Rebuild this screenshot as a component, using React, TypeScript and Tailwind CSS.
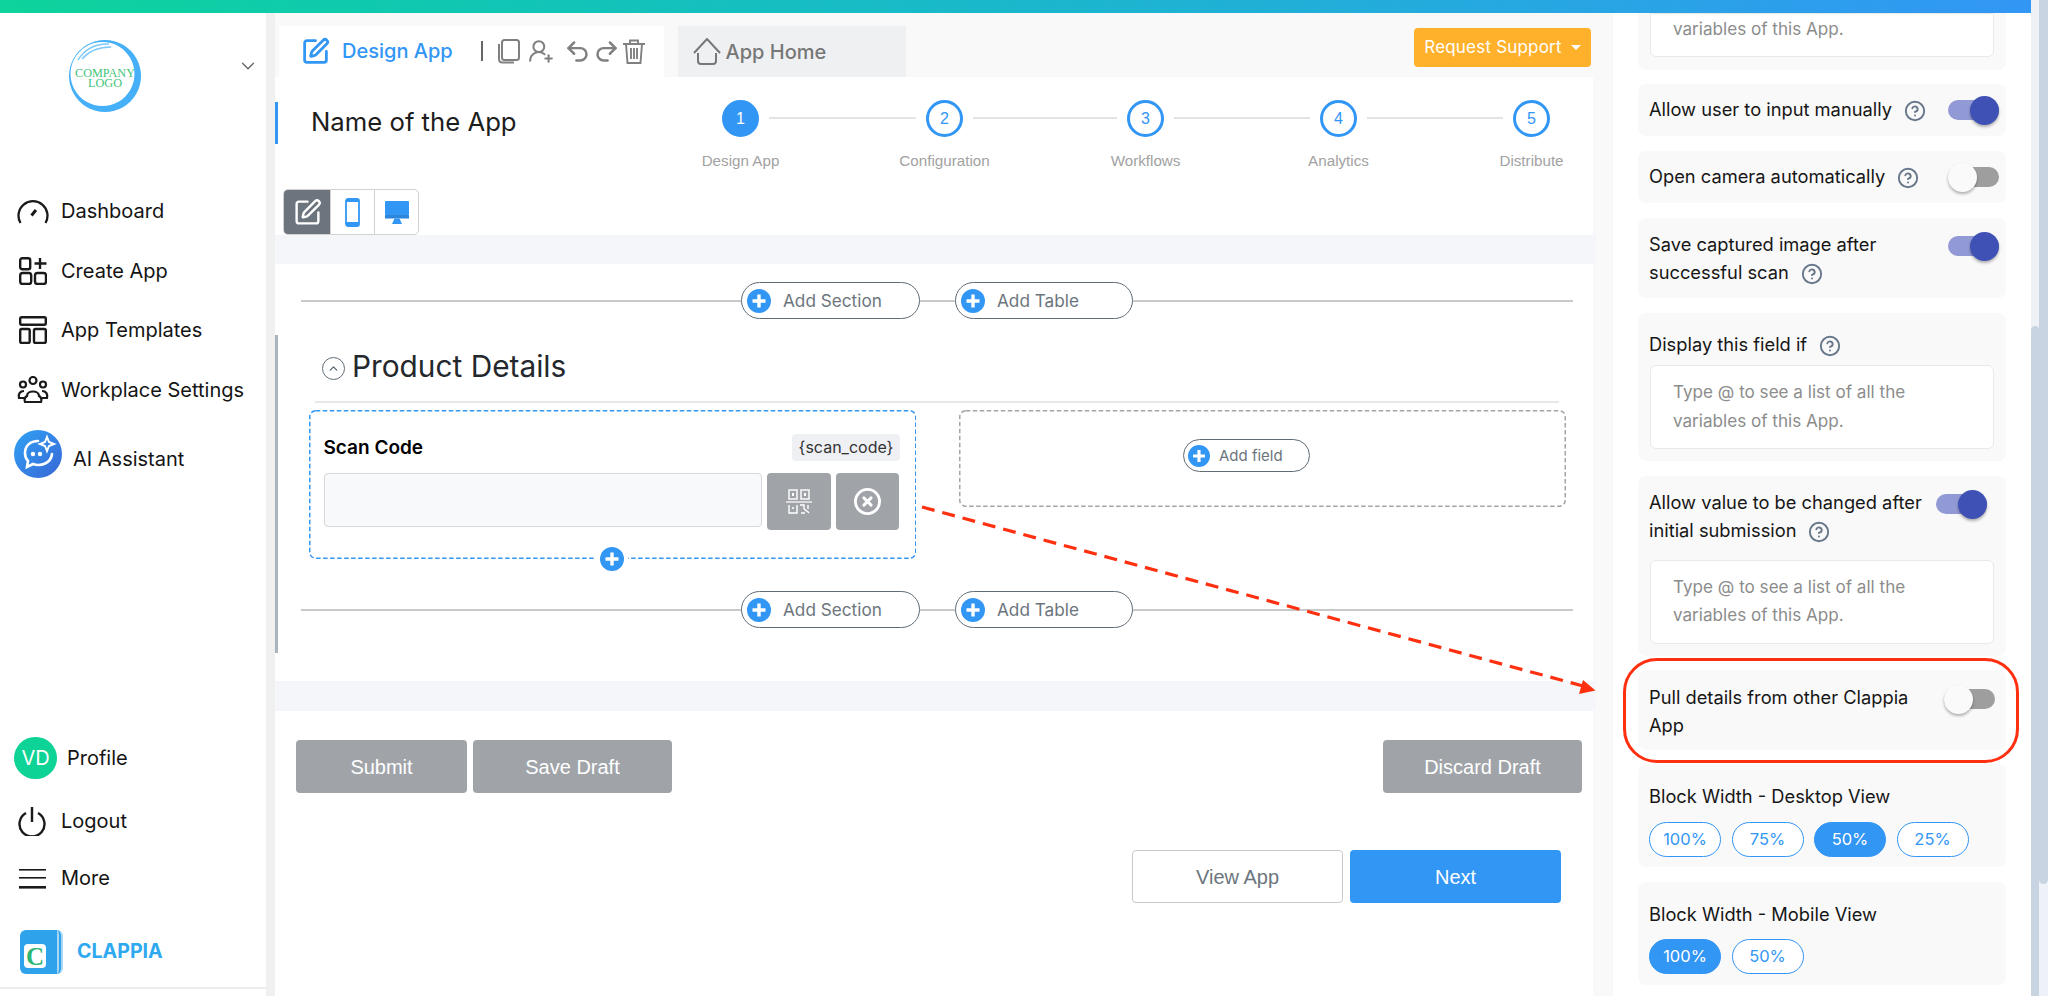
import React from "react";
import { SquarePen, UserRoundPlus, Undo2, Redo2, CircleHelp, CircleX, ChevronDown, ChevronUp } from "lucide-react";

const PlusDot = ({ size = 24 }: { size?: number }) => (
  <svg width={size} height={size} viewBox="0 0 24 24" className="shrink-0">
    <circle cx="12" cy="12" r="12" fill="#3296f5" />
    <path d="M12 5.5v13M5.5 12h13" stroke="#fff" strokeWidth="3.4" />
  </svg>
);

const AddPill = ({ label, w }: { label: string; w: string }) => (
  <div className={`${w} h-[37px] shrink-0 rounded-full border-[1.5px] border-[#5f6b75] bg-white flex items-center pl-[5px]`}>
    <PlusDot />
    <span className="ml-[12px] mt-[1px] text-[17.2px] text-[#6c757d]">{label}</span>
  </div>
);

const AddRow = () => (
  <div className="flex items-center w-[1272px]">
    <div className="flex-1 h-[2px] bg-[#c9c9c9]" />
    <AddPill label="Add Section" w="w-[179px]" />
    <div className="w-[35px] h-[2px] bg-[#c9c9c9]" />
    <AddPill label="Add Table" w="w-[178px]" />
    <div className="w-[440px] h-[2px] bg-[#c9c9c9]" />
  </div>
);

const Step = ({ n, label, active }: { n: number; label: string; active?: boolean }) => (
  <div className="w-[37px] flex flex-col items-center shrink-0">
    <div className={`size-[37px] rounded-full border-[3px] border-[#3296f5] flex items-center justify-center text-[16px] font-['Liberation_Sans',sans-serif] ${active ? "bg-[#3296f5] text-white" : "bg-white text-[#3296f5]"}`}>{n}</div>
    <div className="mt-[14px] leading-[20px] text-[15.2px] whitespace-nowrap text-[#a2a2a2] font-['Liberation_Sans',sans-serif]">{label}</div>
  </div>
);

const StepLine = ({ w }: { w: string }) => <div className={`${w} h-[2px] bg-[#e4e4e4] mt-[17px] mx-[10px] shrink-0`} />;

const Toggle = ({ on }: { on?: boolean }) => (
  <div className={`w-[51px] h-[20px] rounded-full flex items-center shrink-0 ${on ? "bg-[#929ad6] justify-end" : "bg-[#9e9e9e] justify-start"}`}>
    <div className={`size-[29px] rounded-full shrink-0 shadow-[0_2px_3px_rgba(0,0,0,0.3)] ${on ? "bg-[#3f51b5]" : "bg-[#fafafa]"}`} />
  </div>
);

const Help = () => <CircleHelp size={22} strokeWidth={2.1} className="inline-block text-[#68778a] ml-[12px] align-[-6px]" />;

const Vars = ({ h = "h-[84px]", pt = "pt-[12px]", top = true }: { h?: string; pt?: string; top?: boolean }) => (
  <div className={`${h} ${pt} ${top ? "rounded-[6px]" : "rounded-b-[6px]"} border border-[#e9e9e9] bg-white pl-[22px] text-[17.1px] leading-[28.5px] text-[#8c8c8c]`}>
    {top && <>Type @ to see a list of all the<br /></>}variables of this App.
  </div>
);

const WidthPill = ({ t, on }: { t: string; on?: boolean }) => (
  <div className={`w-[72px] h-[35px] rounded-full border-[1.5px] border-[#3296f5] flex items-center justify-center text-[16.5px] ${on ? "bg-[#3296f5] text-white" : "bg-white text-[#3296f5]"}`}>{t}</div>
);

const Nav = ({ icon, label }: { icon: React.ReactNode; label: string }) => (
  <div className="h-[59.7px] flex items-center">
    <div className="w-[61px] flex justify-center shrink-0 pl-[6px] pr-[1px]">{icon}</div>
    <span>{label}</span>
  </div>
);

const GrayBtn = ({ w, t }: { w: string; t: string }) => (
  <div className={`${w} h-[53px] rounded-[4px] bg-[#a0a4a9] text-white text-[20px] flex items-center justify-center font-['Liberation_Sans',sans-serif]`}>{t}</div>
);

const DashFrame = ({ w, h, color }: { w: number; h: number; color: string }) => (
  <svg width={w} height={h} viewBox={`0 0 ${w} ${h}`} className="absolute left-0 top-0 pointer-events-none" fill="none">
    <rect x="0.75" y="0.75" width={w - 1.5} height={h - 1.5} rx="6" stroke={color} strokeWidth="1.5" strokeDasharray="4.5 2.5" />
  </svg>
);

export default function App() {
  return (
    <div className="relative w-[2048px] h-[996px] overflow-hidden flex bg-white font-['Inter',sans-serif] text-[#111]">
      <div className="w-[2039px] h-full flex flex-col shrink-0">
        <div className="h-[13px] shrink-0 bg-gradient-to-r from-[#0ed39b] to-[#3296f5] shadow-[0_1px_2px_rgba(0,0,0,0.08)]" />
        <div className="flex-1 flex min-h-0">
          {/* Sidebar */}
          <aside className="w-[266px] shrink-0 h-[976px] bg-white border-b-2 border-[#ececec] flex flex-col text-[20px] text-[#141414]">
            <div className="flex items-center pt-[27px] pl-[69px] pr-[7px]">
              <svg width="72" height="72" viewBox="0 0 72 72" className="shrink-0">
                <path fillRule="evenodd" fill="#45b0f7" d="M36 0a36 36 0 1 0 .01 0zM33.5 2a32 32 0 1 1-.01 0z" />
                <path d="M9 20C16 9 27 3.5 40 4M13 19C20 11 30 7 42 7" stroke="#7fcaf9" strokeWidth="1.4" fill="none" />
                <text x="36" y="37" textAnchor="middle" textLength="60" lengthAdjust="spacingAndGlyphs" fontFamily="Liberation Serif, serif" fontSize="12" fill="#3fc47a">COMPANY</text>
                <text x="36" y="47" textAnchor="middle" textLength="34" lengthAdjust="spacingAndGlyphs" fontFamily="Liberation Serif, serif" fontSize="12" fill="#3fc47a">LOGO</text>
              </svg>
              <ChevronDown size={22} strokeWidth={1.5} className="ml-auto mb-[20px] text-[#666]" />
            </div>
            <div className="mt-[69px]">
              <Nav label="Dashboard" icon={
                <svg width="32" height="26" viewBox="0 0 32 26" fill="none" stroke="#1a1a1a" strokeWidth="2.3"><path d="M3.5 25A14.5 14.5 0 1 1 28.5 25" /><path d="M14.5 17.5L19 12" strokeWidth="3" /></svg>
              } />
              <Nav label="Create App" icon={
                <svg width="28" height="28" viewBox="0 0 28 28" fill="none" stroke="#1a1a1a" strokeWidth="2.4"><rect x="1.2" y="1.2" width="10" height="11" rx="2" /><path d="M21 1v11M15.5 6.5h12" /><rect x="1.2" y="16" width="11" height="11" rx="2.5" /><rect x="16" y="16" width="11" height="11" rx="2.5" /></svg>
              } />
              <Nav label="App Templates" icon={
                <svg width="28" height="28" viewBox="0 0 28 28" fill="none" stroke="#1a1a1a" strokeWidth="2.4"><rect x="1.2" y="1.2" width="25.6" height="7.5" rx="1.5" /><rect x="1.2" y="13" width="9.5" height="14" rx="1.5" /><rect x="15" y="13" width="11.8" height="14" rx="1.5" /></svg>
              } />
              <Nav label="Workplace Settings" icon={
                <svg width="32" height="27" viewBox="0 0 32 27" fill="none" stroke="#1a1a1a" strokeWidth="2.2"><circle cx="6" cy="8.5" r="3" /><circle cx="16" cy="4.5" r="3.5" /><circle cx="26" cy="8.5" r="3" /><path d="M8 26h16c1-3 0-5-2-6 0-6-12-6-12 0-2 1-3 3-2 6z" /><path d="M7 15c-4 0-6 3-5 7h5M25 15c4 0 6 3 5 7h-5" /></svg>
              } />
            </div>
            <div className="flex items-center ml-[14px] mt-[10px]">
              <svg width="48" height="48" viewBox="0 0 48 48" className="shrink-0">
                <defs><linearGradient id="ai" x1="0" y1="0" x2="1" y2="1"><stop offset="0" stopColor="#2ea2f4" /><stop offset="1" stopColor="#3a66d6" /></linearGradient></defs>
                <circle cx="24" cy="24" r="24" fill="url(#ai)" />
                <path d="M24 11c-8 0-13 5-13 12 0 3 1 6 3 8l-1 6 6-3c8 3 18-1 19-10" fill="none" stroke="#fff" strokeWidth="2.6" strokeLinecap="round" />
                <path d="M33 7l2 5 5 2-5 2-2 5-2-5-5-2 5-2z" fill="none" stroke="#fff" strokeWidth="2" />
                <circle cx="19" cy="24" r="2.2" fill="#fff" /><circle cx="26" cy="24" r="2.2" fill="#fff" />
              </svg>
              <span className="ml-[11px] mt-[10px]">AI Assistant</span>
            </div>
            <div className="mt-auto">
              <div className="flex items-center ml-[14px]">
                <div className="w-[43px] h-[42px] rounded-full bg-[#0dd396] text-white text-[20px] flex items-center justify-center">VD</div>
                <span className="ml-[10px]">Profile</span>
              </div>
              <div className="flex items-center mt-[24px] h-[36px]">
                <div className="w-[61px] pl-[18px] shrink-0">
                  <svg width="28" height="29" viewBox="0 0 28 29" fill="none" stroke="#1a1a1a" strokeWidth="2.4"><path d="M8 6a12.5 12.5 0 1 0 12 0" /><path d="M14 0v15" /></svg>
                </div>
                <span>Logout</span>
              </div>
              <div className="flex items-center mt-[21px] h-[36px]">
                <div className="w-[61px] pl-[19px] shrink-0">
                  <svg width="27" height="21" viewBox="0 0 27 21" fill="#1a1a1a"><rect y="1" width="27" height="1.6" /><rect y="9" width="27" height="1.6" /><rect y="18" width="27" height="2.6" /></svg>
                </div>
                <span>More</span>
              </div>
              <div className="flex items-center ml-[20px] mt-[34px] mb-[13px]">
                <div className="relative w-[43px] h-[44px] rounded-[6px] bg-[#2ea3ec] border-r-[6px] border-double border-[#a9d8f7] shrink-0">
                  <div className="absolute left-[4px] bottom-[6px] w-[22px] h-[24px] rounded-[4px] bg-white flex items-center justify-center text-[25px] leading-none font-bold text-[#2bb673] font-['Liberation_Serif',serif]">C</div>
                </div>
                <span className="ml-[14px] text-[19.6px] font-bold text-[#2ea8ef]">CLAPPIA</span>
              </div>
            </div>
          </aside>
          <div className="w-[9px] shrink-0 bg-[#f0f0f0]" />

          {/* Main */}
          <main className="w-[1338px] shrink-0 bg-[#f9f9fa] flex flex-col">
            <div className="h-[64px] shrink-0 flex items-start pt-[13px]">
              <div className="ml-[4px] w-[385px] h-[51px] bg-white flex items-center pl-[22px] pb-[1px] text-[#8a8a8a]">
                <SquarePen size={29} strokeWidth={2.3} className="text-[#3296f5] shrink-0" />
                <span className="ml-[12px] text-[20px] font-medium text-[#3296f5]">Design App</span>
                <span className="ml-[28px] w-[2px] h-[20px] bg-[#666] shrink-0" />
                <svg width="23" height="25" viewBox="0 0 23 25" fill="none" stroke="#808080" strokeWidth="2" className="ml-[14px] shrink-0"><rect x="5" y="1" width="17" height="20" rx="2.5" /><path d="M2 5v15c0 2 1.5 3.5 3.5 3.5H17" /></svg>
                <UserRoundPlus size={26} strokeWidth={1.9} className="ml-[8px] text-[#808080] shrink-0" />
                <Undo2 size={27} strokeWidth={2.2} className="ml-[10px] text-[#808080] shrink-0" />
                <Redo2 size={27} strokeWidth={2.2} className="ml-[2px] text-[#808080] shrink-0" />
                <svg width="24" height="25" viewBox="0 0 24 25" fill="none" stroke="#808080" strokeWidth="1.9" className="ml-[2px] shrink-0"><path d="M1 5h22M8 5V1.5h8V5M4 5l1.5 19h13L20 5M9 9v11M12 9v11M15 9v11" /></svg>
              </div>
              <div className="ml-[14px] w-[228px] h-[51px] bg-[#eff0f2] flex items-center pl-[15px] text-[#777]">
                <svg width="28" height="27" viewBox="0 0 28 27" fill="none" stroke="#777" strokeWidth="2"><path d="M1 15L14 1l13 14" /><path d="M5 15v8c0 2 1 3 3 3h12c2 0 3-1 3-3v-8" /></svg>
                <span className="ml-[4.5px] text-[20px] font-medium">App Home</span>
              </div>
              <div className="ml-[508px] mt-[2px] w-[177px] h-[39px] rounded-[4px] bg-[#ffb12b] text-white text-[17px] tracking-[0.2px] flex items-center justify-center">
                Request Support
                <span className="ml-[9px] w-0 h-0 border-x-[5px] border-x-transparent border-t-[5px] border-t-white" />
              </div>
            </div>

            {/* Header card */}
            <div className="w-[1318px] h-[158px] shrink-0 bg-white">
              <div className="h-[112px] flex items-start">
                <div className="w-[3px] h-[42px] mt-[25px] bg-[#3296f5] shrink-0" />
                <div className="w-[444px] shrink-0 pl-[33px] pt-[25px] text-[25.7px] leading-[39px] text-[#1d1d1d]">Name of the App</div>
                <div className="flex items-start pt-[23px]">
                  <Step n={1} label="Design App" active />
                  <StepLine w="w-[147px]" />
                  <Step n={2} label="Configuration" />
                  <StepLine w="w-[144px]" />
                  <Step n={3} label="Workflows" />
                  <StepLine w="w-[136px]" />
                  <Step n={4} label="Analytics" />
                  <StepLine w="w-[136px]" />
                  <Step n={5} label="Distribute" />
                </div>
              </div>
              <div className="ml-[8px] w-[136px] h-[46px] rounded-[5px] border border-[#d2d2d2] flex overflow-hidden">
                <div className="w-[46px] bg-[#6c757d] flex items-center justify-center"><SquarePen size={29} strokeWidth={2} className="text-white" /></div>
                <div className="w-[45px] border-x border-[#d2d2d2] flex items-center justify-center">
                  <svg width="15" height="29" viewBox="0 0 15 29" fill="none" stroke="#3296f5" strokeWidth="1.8"><rect x="1" y="1" width="13" height="27" rx="2" /><rect x="1" y="1" width="13" height="3" fill="#3296f5" stroke="none" /><rect x="1" y="24" width="13" height="4" fill="#3296f5" stroke="none" /></svg>
                </div>
                <div className="flex-1 flex items-center justify-center">
                  <svg width="24" height="23" viewBox="0 0 24 23" fill="#3296f5"><rect y="0" width="24" height="14" rx="1" /><rect y="14" width="24" height="3.5" fill="#2c86dc" /><path d="M7 23l2.5-5.5h5L17 23z" /></svg>
                </div>
              </div>
            </div>
            <div className="w-[1321px] h-[29px] shrink-0 bg-[#f4f6f9]" />

            {/* Section card */}
            <div className="w-[1318px] h-[417px] shrink-0 bg-white pt-[18px]">
              <div className="ml-[26px]"><AddRow /></div>
              <div className="mt-[16px] flex">
                <div className="w-[3px] h-[318px] bg-[#a9b4bd] shrink-0" />
                <div className="flex-1">
                  <div className="ml-[44px] mt-[11px] flex items-center h-[40px]">
                    <div className="size-[23px] rounded-full border-[1.5px] border-[#5f6b75] flex items-center justify-center mt-[4px] shrink-0"><ChevronUp size={13} strokeWidth={2.6} className="text-[#5f6b75]" /></div>
                    <span className="ml-[7px] text-[29.8px] text-[#24282c]">Product Details</span>
                  </div>
                  <div className="ml-[37px] w-[1244px] h-[2px] mt-[15px] bg-[#e8e8e8]" />
                  <div className="ml-[30.5px] mt-[7px] flex items-start">
                    <div className="relative w-[607.5px] h-[149px] pl-[15px] pr-[16px] pt-[23px]">
                      <DashFrame w={607.5} h={149} color="#3296f5" />
                      <div className="flex items-center justify-between h-[28px]">
                        <span className="mt-[3px] text-[19px] font-semibold text-black">Scan Code</span>
                        <span className="w-[108px] h-[27px] rounded-[4px] bg-[#eff0f3] text-[16px] text-[#333] flex items-center justify-center">{"{scan_code}"}</span>
                      </div>
                      <div className="mt-[12px] flex items-start">
                        <div className="w-[438px] h-[54px] rounded-[4px] border-[1.5px] border-[#d5d7da] bg-[#f8f9fa]" />
                        <div className="ml-[5.5px] w-[63.5px] h-[57px] rounded-[4px] bg-[#a0a4a9] flex items-center justify-center">
                          <svg width="26" height="26" viewBox="0 0 26 26" fill="none" stroke="#fff" strokeWidth="1.4"><rect x="3" y="1" width="8" height="9" /><rect x="15" y="1" width="8" height="9" /><rect x="6" y="4" width="2" height="3" fill="#fff" stroke="none" /><rect x="18" y="4" width="2" height="3" fill="#fff" stroke="none" /><path d="M0 13h26" strokeWidth="1.2" /><path d="M3 16v8h8v-8M6 19h2M14 16h4v3c0 3 3 2 5 5M22 16v4M15 24h4" /></svg>
                        </div>
                        <div className="ml-[5px] w-[63.5px] h-[57px] rounded-[4px] bg-[#a0a4a9] flex items-center justify-center"><CircleX size={29} strokeWidth={2.4} className="text-white" /></div>
                      </div>
                      <div className="absolute left-[287px] bottom-[-12px] bg-white px-[4px] flex"><PlusDot /></div>
                    </div>
                    <div className="relative ml-[43px] w-[607px] h-[97px] flex pl-[224px] pt-[29px]">
                      <DashFrame w={607} h={97} color="#a5a5a5" />
                      <div className="w-[127px] h-[33px] rounded-full border-[1.5px] border-[#5f6b75] flex items-center pl-[4px]">
                        <PlusDot size={22} />
                        <span className="ml-[9px] mt-[1px] text-[15px] text-[#6c757d]">Add field</span>
                      </div>
                    </div>
                  </div>
                  <div className="mt-[32px] ml-[23px]"><AddRow /></div>
                </div>
              </div>
            </div>
            <div className="w-[1321px] h-[30px] shrink-0 bg-[#f4f6f9]" />

            {/* Bottom */}
            <div className="w-[1318px] flex-1 bg-white pt-[29px]">
              <div className="flex pl-[21px] pr-[11px]">
                <GrayBtn w="w-[171px]" t="Submit" />
                <div className="ml-[6px]"><GrayBtn w="w-[199px]" t="Save Draft" /></div>
                <div className="ml-auto"><GrayBtn w="w-[199px]" t="Discard Draft" /></div>
              </div>
              <div className="mt-[57px] flex justify-end gap-[7px] pr-[32px] font-['Liberation_Sans',sans-serif] text-[20px]">
                <div className="w-[211px] h-[53px] rounded-[4px] border border-[#c9c9c9] text-[#6c757d] flex items-center justify-center">View App</div>
                <div className="w-[211px] h-[53px] rounded-[4px] bg-[#3296f5] text-white flex items-center justify-center">Next</div>
              </div>
            </div>
          </main>

          {/* Right panel */}
          <section className="w-[418px] shrink-0 bg-white px-[25px] text-[18.3px] leading-[28.5px] text-[#161616]">
            <div className="h-[57px] rounded-b-[8px] bg-[#f9f9f9] px-[12px]"><Vars h="h-[44px]" pt="pt-[1px]" top={false} /></div>
            <div className="mt-[14px] h-[52px] rounded-[8px] bg-[#f9f9f9] pl-[11px] pr-[7px] pb-[2px] flex items-center justify-between">
              <span>Allow user to input manually<Help /></span><div className="mt-[2px]"><Toggle on /></div>
            </div>
            <div className="mt-[15px] h-[52px] rounded-[8px] bg-[#f9f9f9] pl-[11px] pr-[7px] pb-[2px] flex items-center justify-between">
              <span>Open camera automatically<Help /></span><div className="mt-[2px]"><Toggle /></div>
            </div>
            <div className="mt-[15px] h-[80px] rounded-[8px] bg-[#f9f9f9] pl-[11px] pr-[7px] pt-[11.5px] flex items-start justify-between">
              <span>Save captured image after<br />successful scan<Help /></span><div className="mt-[6.5px]"><Toggle on /></div>
            </div>
            <div className="mt-[15px] h-[148px] rounded-[8px] bg-[#f9f9f9] px-[12px] pt-[17px]">
              <div className="-ml-[1px]">Display this field if<Help /></div>
              <div className="mt-[6.5px]"><Vars /></div>
            </div>
            <div className="mt-[15px] h-[180px] rounded-[8px] bg-[#f9f9f9] pl-[12px] pr-[19px] pt-[11.5px]">
              <div className="-ml-[1px] flex items-start justify-between">
                <span>Allow value to be changed after<br />initial submission<Help /></span><div className="mt-[6.5px]"><Toggle on /></div>
              </div>
              <div className="mt-[15px] mr-[-7px]"><Vars /></div>
            </div>
            <div className="relative mt-[14px] h-[80px] rounded-[8px] bg-[#f9f9f9] pl-[11px] pr-[11px] pt-[12.5px] flex items-start justify-between">
              <span>Pull details from other Clappia<br />App</span><div className="mt-[6.5px]"><Toggle /></div>
              <div className="absolute left-[-15px] right-[-13px] top-[-12px] bottom-[-13px] rounded-[34px] border-[3px] border-[#ff3010]" />
            </div>
            <div className="mt-[14px] h-[103px] rounded-[8px] bg-[#f9f9f9] px-[11px] pt-[18px]">
              <div>Block Width - Desktop View</div>
              <div className="mt-[11px] flex gap-[10.5px]"><WidthPill t="100%" /><WidthPill t="75%" /><WidthPill t="50%" on /><WidthPill t="25%" /></div>
            </div>
            <div className="mt-[15px] h-[103px] rounded-[8px] bg-[#f9f9f9] px-[11px] pt-[18px]">
              <div>Block Width - Mobile View</div>
              <div className="mt-[10px] flex gap-[10.5px]"><WidthPill t="100%" on /><WidthPill t="50%" /></div>
            </div>
          </section>

          {/* Inner scrollbar */}
          <div className="w-[8px] shrink-0 flex flex-col bg-[#eef2f7] -mt-[13px] h-[996px] z-10">
            <div className="h-[326px] shrink-0" />
            <div className="flex-1 rounded-t-[6px] bg-[#c9d4e2]" />
          </div>
        </div>
      </div>
      {/* Outer scrollbar */}
      <div className="w-[9px] shrink-0 flex flex-col bg-[#eef2f8]">
        <div className="h-[884px] rounded-b-[6px] bg-[#c9d4e2]" />
      </div>

      {/* Annotation arrow */}
      <svg width="2048" height="996" viewBox="0 0 2048 996" className="absolute left-0 top-0 pointer-events-none">
        <path d="M922 507L1583 686" stroke="#ff3010" strokeWidth="3.2" strokeDasharray="13 8" fill="none" />
        <path d="M1583 680L1579 694L1595.5 690.5z" fill="#ff3010" />
      </svg>
    </div>
  );
}
